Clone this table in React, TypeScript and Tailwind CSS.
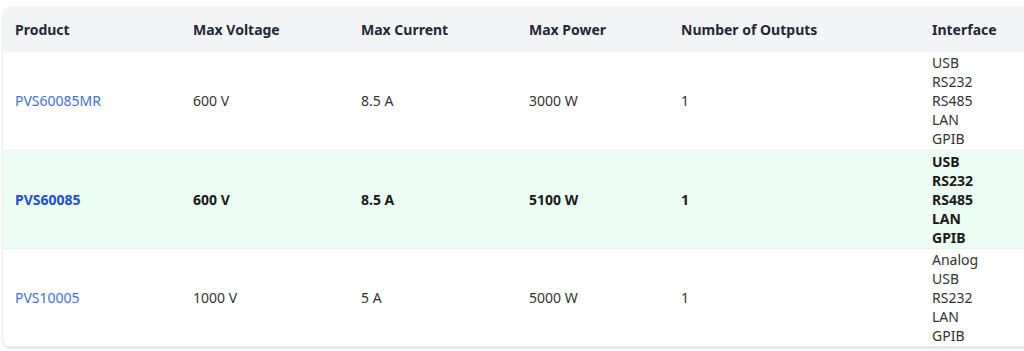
import React from 'react';

interface Row {
  product: string;
  voltage: string;
  current: string;
  power: string;
  outputs: string;
  interfaces: string[];
  active?: boolean;
}

const ROWS: Row[] = [
  { product: 'PVS60085MR', voltage: '600 V', current: '8.5 A', power: '3000 W', outputs: '1', interfaces: ['USB', 'RS232', 'RS485', 'LAN', 'GPIB'] },
  { product: 'PVS60085', voltage: '600 V', current: '8.5 A', power: '5100 W', outputs: '1', interfaces: ['USB', 'RS232', 'RS485', 'LAN', 'GPIB'], active: true },
  { product: 'PVS10005', voltage: '1000 V', current: '5 A', power: '5000 W', outputs: '1', interfaces: ['Analog', 'USB', 'RS232', 'LAN', 'GPIB'] },
];

const HEADERS = ['Product', 'Max Voltage', 'Max Current', 'Max Power', 'Number of Outputs', 'Interface'];
const WIDTHS = ['w-[178px]', 'w-[168px]', 'w-[168px]', 'w-[152px]', 'w-[251px]', 'w-[135px]'];

export default function App() {
  return (
    <div
      className="w-full h-[351px] overflow-hidden bg-white pt-[7px] pl-[3px]"
      style={{ fontFamily: '"Noto Sans", "Open Sans", sans-serif' }}
    >
      <div className="w-[1040px] rounded-lg bg-white shadow-[0_1px_3px_rgba(0,0,0,0.18)] overflow-hidden">
        <table className="w-full table-fixed border-collapse text-[14px] text-[#333]">
          <colgroup>
            {WIDTHS.map((w, i) => (
              <col key={i} className={w} />
            ))}
          </colgroup>
          <thead>
            <tr className="bg-[#f3f4f6] h-[45px]">
              {HEADERS.map(h => (
                <th key={h} className="pl-3 text-left font-bold text-[#1f2937] align-middle">
                  {h}
                </th>
              ))}
            </tr>
          </thead>
          <tbody>
            {ROWS.map(r => (
              <tr
                key={r.product}
                className={`h-[98px] border-b border-[#eef0f2] ${r.active ? 'bg-[#ecfdf3] font-bold text-[#1a1a1a]' : ''}`}
              >
                <td className="pl-3 align-middle">
                  <span className={r.active ? 'text-[#1d4ed8]' : 'text-[#3f6fe0]'}>{r.product}</span>
                </td>
                <td className="pl-3 align-middle">{r.voltage}</td>
                <td className="pl-3 align-middle">{r.current}</td>
                <td className="pl-3 align-middle">{r.power}</td>
                <td className="pl-3 align-middle">{r.outputs}</td>
                <td className="pl-3 py-px align-middle leading-[19px]">
                  {r.interfaces.map(i => (
                    <div key={i}>{i}</div>
                  ))}
                </td>
              </tr>
            ))}
          </tbody>
        </table>
      </div>
    </div>
  );
}
